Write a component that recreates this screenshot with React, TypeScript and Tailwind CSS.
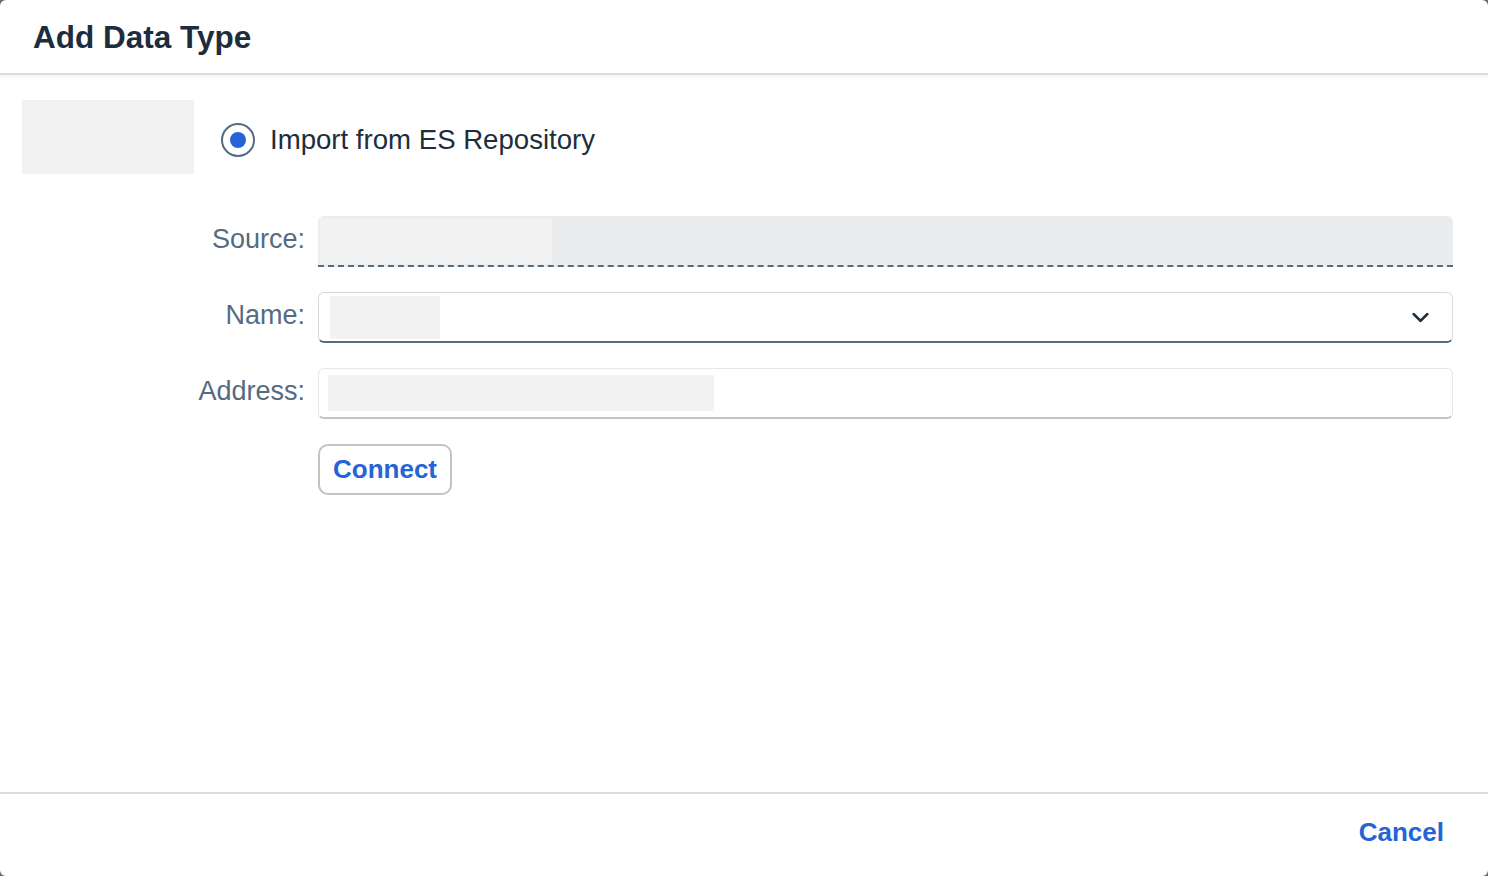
import { ChevronDown } from 'lucide-react'

const font = { fontFamily: '"Liberation Sans", Arial, sans-serif' }

const Label = ({ text }: { text: string }) => (
    <div className='w-[318px] shrink-0 pb-[5px] pr-[13px] text-right text-[27px] text-[#556b82]'>{text}</div>
)

export default function App() {
    return (
        <div className='h-[876px] w-[1488px] bg-[#6a6d70]' style={font}>
            <div className='flex h-full w-full flex-col overflow-hidden rounded-[6px] bg-white'>
                {/* Header */}
                <div className='flex h-[75px] shrink-0 items-center border-b-2 border-[#dcdddf] px-[33px] pt-[3px] shadow-[0_2px_3px_rgba(0,0,0,0.05)]'>
                    <h1 className='text-[31.5px] font-bold text-[#1d2d3e]'>Add Data Type</h1>
                </div>

                {/* Body */}
                <div className='flex flex-1 flex-col'>
                    <div className='flex items-center pl-[22px] pt-[25px]'>
                        <div className='h-[74px] w-[172px] bg-[#f2f2f2]' />
                        <div className='ml-[27px] flex items-center pt-[6px]'>
                            <div className='flex h-[34px] w-[34px] items-center justify-center rounded-full border-2 border-[#556b82]'>
                                <div className='h-[16px] w-[16px] rounded-full bg-[#2563d6]' />
                            </div>
                            <span className='ml-[15px] text-[27.6px] text-[#1d2d3e]'>Import from ES Repository</span>
                        </div>
                    </div>

                    <div className='mt-[42px] flex flex-col gap-[25px] pr-[35px]'>
                        <div className='flex items-center'>
                            <Label text='Source:' />
                            <div className='flex h-[51px] flex-1 items-stretch rounded-t-[6px] border-b-2 border-dashed border-[#556b82] bg-[#eaecee] p-[2px] pb-[1px]'>
                                <div className='w-[232px] bg-[#f2f2f2]' />
                            </div>
                        </div>

                        <div className='flex items-center'>
                            <Label text='Name:' />
                            <div className='flex h-[51px] flex-1 items-center rounded-[6px] border border-b-2 border-[#d5dadd] border-b-[#556b82] bg-white pl-[11px] pr-[18px]'>
                                <div className='h-[43px] w-[110px] bg-[#f2f2f2]' />
                                <div className='flex-1' />
                                <ChevronDown size={27} strokeWidth={2.5} className='text-[#1d2d3e]' />
                            </div>
                        </div>

                        <div className='flex items-center'>
                            <Label text='Address:' />
                            <div className='flex h-[51px] flex-1 items-center rounded-[6px] border border-b-2 border-[#e5e7e9] border-b-[#c0c5cb] bg-white pl-[9px]'>
                                <div className='h-[36px] w-[386px] bg-[#f2f2f2]' />
                            </div>
                        </div>

                        <div className='flex'>
                            <div className='w-[318px] shrink-0' />
                            <button className='h-[51px] w-[134px] rounded-[10px] border-2 border-[#bcc3ca] bg-white text-[26px] font-bold text-[#2563d6]'>
                                Connect
                            </button>
                        </div>
                    </div>
                </div>

                {/* Footer */}
                <div className='flex h-[84px] shrink-0 items-center justify-end border-t-2 border-[#dcdddf] pb-[6px] pr-[44px]'>
                    <button className='text-[26px] font-bold text-[#2563d6]'>Cancel</button>
                </div>
            </div>
        </div>
    )
}
